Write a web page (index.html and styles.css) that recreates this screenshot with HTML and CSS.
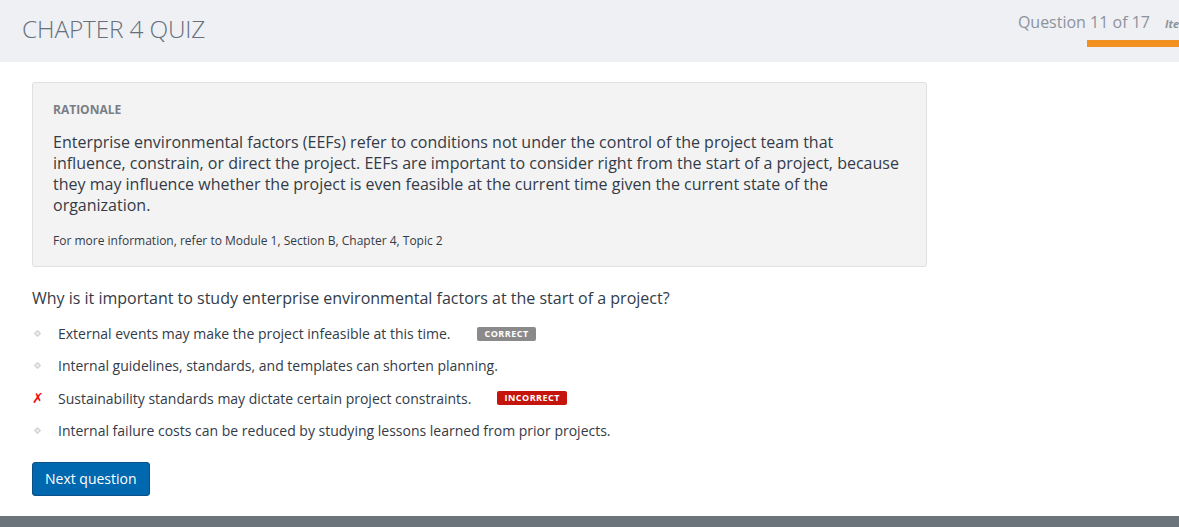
FILE: index.html
```html
<!DOCTYPE html>
<html>
<head>
<meta charset="utf-8">
<link rel="stylesheet" href="styles.css">
</head>
<body>
<header class="topbar">
  <h1 class="title">CHAPTER 4 QUIZ</h1>
  <div class="progress">
    <div class="progress-row">
      <span class="qcount">Question 11 of 17</span>
      <span class="items">Items</span>
    </div>
    <div class="bar"></div>
  </div>
</header>
<main class="content">
  <section class="rationale">
    <div class="r-label">RATIONALE</div>
    <p class="r-text">Enterprise environmental factors (EEFs) refer to conditions not under the control of the project team that influence, constrain, or direct the project. EEFs are important to consider right from the start of a project, because they may influence whether the project is even feasible at the current time given the current state of the organization.</p>
    <p class="r-ref">For more information, refer to Module 1, Section B, Chapter 4, Topic 2</p>
  </section>
  <p class="question">Why is it important to study enterprise environmental factors at the start of a project?</p>
  <ul class="options">
    <li class="opt"><span class="mark dot"></span><span class="opt-text">External events may make the project infeasible at this time.</span><span class="badge correct">CORRECT</span></li>
    <li class="opt"><span class="mark dot"></span><span class="opt-text">Internal guidelines, standards, and templates can shorten planning.</span></li>
    <li class="opt"><span class="mark cross">✗</span><span class="opt-text">Sustainability standards may dictate certain project constraints.</span><span class="badge incorrect">INCORRECT</span></li>
    <li class="opt"><span class="mark dot"></span><span class="opt-text">Internal failure costs can be reduced by studying lessons learned from prior projects.</span></li>
  </ul>
  <button class="next">Next question</button>
</main>
<footer class="footer"></footer>
</body>
</html>
```
FILE: styles.css
```css
html, body {
  margin: 0;
  padding: 0;
}
body {
  font-family: "Open Sans", "Noto Sans", sans-serif;
  background: #ffffff;
  color: #333b47;
  width: 1179px;
  height: 527px;
  overflow: hidden;
  display: flex;
  flex-direction: column;
}
.topbar {
  height: 62px;
  background: #eff0f4;
  display: flex;
  justify-content: space-between;
  align-items: flex-start;
  flex-shrink: 0;
}
.title {
  margin: 13px 0 0 22px;
  font-weight: 300;
  font-size: 24.4px;
  line-height: 32px;
  color: #66707c;
  letter-spacing: -0.15px;
}
.progress {
  margin-top: 11px;
  display: flex;
  flex-direction: column;
  align-items: flex-end;
}
.progress-row {
  display: flex;
  align-items: baseline;
  gap: 15px;
  margin-right: -30px;
}
.qcount {
  font-size: 16px;
  line-height: 22px;
  color: #8d939b;
}
.items {
  font-size: 11px;
  font-style: italic;
  font-weight: 700;
  color: #8d939b;
  width: 44px;
}
.bar {
  width: 92px;
  height: 7px;
  background: #f29021;
  margin-top: 7px;
}
.content {
  flex: 1;
  padding: 20px 32px 0 32px;
  display: flex;
  flex-direction: column;
  align-items: flex-start;
}
.rationale {
  width: 853px;
  background: #f3f3f3;
  border: 1px solid #e0e0e0;
  border-radius: 3px;
  padding: 18px 20px 17px 20px;
}
.r-label {
  font-size: 12px;
  font-weight: 700;
  color: #7a7e84;
  line-height: 17px;
}
.r-text {
  margin: 14px 0 0 0;
  font-size: 16px;
  line-height: 21px;
  color: #333b47;
  width: 855px;
}
.r-ref {
  margin: 16px 0 0 0;
  font-size: 12px;
  line-height: 17px;
  color: #333b47;
}
.question {
  margin: 20px 0 0 0;
  font-size: 16px;
  line-height: 22px;
  color: #333b47;
}
.options {
  list-style: none;
  margin: 15px 0 0 0;
  padding: 0;
  display: flex;
  flex-direction: column;
  gap: 13.3px;
}
.opt {
  display: flex;
  align-items: center;
  height: 19px;
  font-size: 14px;
  color: #333b47;
}
.mark {
  width: 26px;
  flex-shrink: 0;
  display: flex;
  align-items: center;
}
.dot::before {
  content: "";
  display: block;
  width: 3px;
  height: 3px;
  margin-left: 3px;
  border: 1px solid #cfcfcf;
  background: #ececec;
  transform: rotate(45deg);
}
.cross {
  color: #ee1111;
  font-size: 14px;
  font-weight: 700;
  font-family: "DejaVu Sans", sans-serif;
  padding-left: 0;
}
.badge {
  font-size: 9px;
  font-weight: 700;
  color: #ffffff;
  letter-spacing: 0.5px;
  line-height: 14px;
  padding: 0 8px;
  border-radius: 2px;
  margin-left: 27px;
}
.correct {
  background: #8a8a8a;
  padding: 0 7px;
}
.incorrect {
  background: #c4140c;
  margin-left: 26px;
  padding: 0 7px;
}
.next {
  margin-top: 22px;
  font-family: "Open Sans", sans-serif;
  font-size: 14px;
  color: #ffffff;
  background: #0068ae;
  border: 1px solid #0b4f86;
  border-radius: 3px;
  padding: 0 12px;
  height: 34px;
  cursor: pointer;
}
.footer {
  height: 11px;
  background: #6b737b;
  flex-shrink: 0;
}
```
